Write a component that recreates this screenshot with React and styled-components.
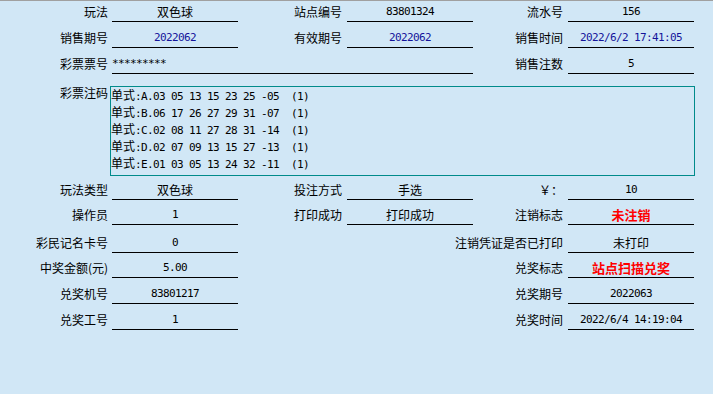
import styled, { createGlobalStyle } from "styled-components";

const GlobalStyle = createGlobalStyle`
  html, body {
    margin: 0;
    padding: 0;
    background: #d1e7f6;
  }
  body {
    font-family: "Noto Sans CJK SC", sans-serif;
    font-size: 12px;
    color: #000;
  }
`;

const Page = styled.div`
  width: 713px;
  height: 394px;
  box-sizing: border-box;
  border-top: 1px solid #a0a0a0;
  background: #d1e7f6;
  overflow: hidden;
`;

const Row = styled.div`
  display: grid;
  grid-template-columns: 112px 126px 109px 126px 95px 126px;
  height: ${(p) => p.$h}px;
  align-items: ${(p) => (p.$top ? "start" : "end")};
  margin-top: ${(p) => p.$mt || 0}px;
`;

const Label = styled.div`
  grid-column: ${(p) => p.$col};
  text-align: right;
  padding-right: ${(p) => (p.$col === 1 ? 4 : 5)}px;
  padding-bottom: 1px;
  line-height: ${(p) => p.$lh || 18}px;
  white-space: nowrap;
`;

const Field = styled.div`
  grid-column: ${(p) => p.$col};
  height: 18px;
  line-height: 18px;
  border-bottom: 1px solid #000;
  text-align: ${(p) => (p.$left ? "left" : "center")};
  white-space: pre;
  color: ${(p) => (p.$flag ? "#ff0000" : p.$blue ? "#14149a" : "#000")};
  font-weight: ${(p) => (p.$flag ? 700 : 400)};
  font-size: ${(p) => (p.$flag ? 13 : p.$mono ? 11 : 12)}px;
  font-family: ${(p) =>
    p.$mono
      ? `"DejaVu Sans Mono", "Liberation Mono", monospace`
      : `"Noto Sans CJK SC", sans-serif`};
  letter-spacing: ${(p) => (p.$mono ? "-0.62px" : "0")};
`;

const CodeBox = styled.div`
  grid-column: 2 / 7;
  margin-left: -2px;
  margin-right: -1px;
  height: 90px;
  box-sizing: border-box;
  border: 1px solid #008b8b;
  overflow: hidden;
`;

const Lines = styled.div`
  margin-top: -1px;
`;

const CodeLine = styled.div`
  line-height: 17px;
  height: 17px;
  white-space: pre;
`;

const Kind = styled.span`
  font-family: "Noto Sans CJK SC", sans-serif;
  font-size: 12px;
`;

const Mono = styled.span`
  font-family: "DejaVu Sans Mono", "Liberation Mono", monospace;
  font-size: 11px;
  letter-spacing: -0.62px;
`;

const codes = [
  ":A.03 05 13 15 23 25 -05  (1)",
  ":B.06 17 26 27 29 31 -07  (1)",
  ":C.02 08 11 27 28 31 -14  (1)",
  ":D.02 07 09 13 15 27 -13  (1)",
  ":E.01 03 05 13 24 32 -11  (1)",
];

export default function App() {
  return (
    <>
      <GlobalStyle />
      <Page>
        <Row $h={21}>
          <Label $col={1}>玩法</Label>
          <Field $col={2}>双色球</Field>
          <Label $col={3}>站点编号</Label>
          <Field $col={4} $mono>83801324</Field>
          <Label $col={5}>流水号</Label>
          <Field $col={6} $mono>156</Field>
        </Row>
        <Row $h={26}>
          <Label $col={1}>销售期号</Label>
          <Field $col={2} $mono $blue>2022062</Field>
          <Label $col={3}>有效期号</Label>
          <Field $col={4} $mono $blue>2022062</Field>
          <Label $col={5}>销售时间</Label>
          <Field $col={6} $mono $blue>2022/6/2 17:41:05</Field>
        </Row>
        <Row $h={26}>
          <Label $col={1}>彩票票号</Label>
          <Field $col="2 / 5" $mono $left>*********</Field>
          <Label $col={5}>销售注数</Label>
          <Field $col={6} $mono>5</Field>
        </Row>
        <Row $h={90} $mt={12} $top>
          <Label $col={1} $lh={14}>彩票注码</Label>
          <CodeBox>
            <Lines>
              {codes.map((c) => (
                <CodeLine key={c}>
                  <Kind>单式</Kind>
                  <Mono>{c}</Mono>
                </CodeLine>
              ))}
            </Lines>
          </CodeBox>
        </Row>
        <Row $h={24}>
          <Label $col={1}>玩法类型</Label>
          <Field $col={2}>双色球</Field>
          <Label $col={3}>投注方式</Label>
          <Field $col={4}>手选</Field>
          <Label $col={5}>￥：</Label>
          <Field $col={6} $mono>10</Field>
        </Row>
        <Row $h={25}>
          <Label $col={1}>操作员</Label>
          <Field $col={2} $mono>1</Field>
          <Label $col={3}>打印成功</Label>
          <Field $col={4}>打印成功</Field>
          <Label $col={5}>注销标志</Label>
          <Field $col={6} $flag>未注销</Field>
        </Row>
        <Row $h={28}>
          <Label $col={1}>彩民记名卡号</Label>
          <Field $col={2} $mono>0</Field>
          <Label $col="3 / 6">注销凭证是否已打印</Label>
          <Field $col={6}>未打印</Field>
        </Row>
        <Row $h={25}>
          <Label $col={1}>中奖金额(元)</Label>
          <Field $col={2} $mono>5.00</Field>
          <Label $col={5}>兑奖标志</Label>
          <Field $col={6} $flag>站点扫描兑奖</Field>
        </Row>
        <Row $h={26}>
          <Label $col={1}>兑奖机号</Label>
          <Field $col={2} $mono>83801217</Field>
          <Label $col={5}>兑奖期号</Label>
          <Field $col={6} $mono>2022063</Field>
        </Row>
        <Row $h={26}>
          <Label $col={1}>兑奖工号</Label>
          <Field $col={2} $mono>1</Field>
          <Label $col={5}>兑奖时间</Label>
          <Field $col={6} $mono>2022/6/4 14:19:04</Field>
        </Row>
      </Page>
    </>
  );
}
